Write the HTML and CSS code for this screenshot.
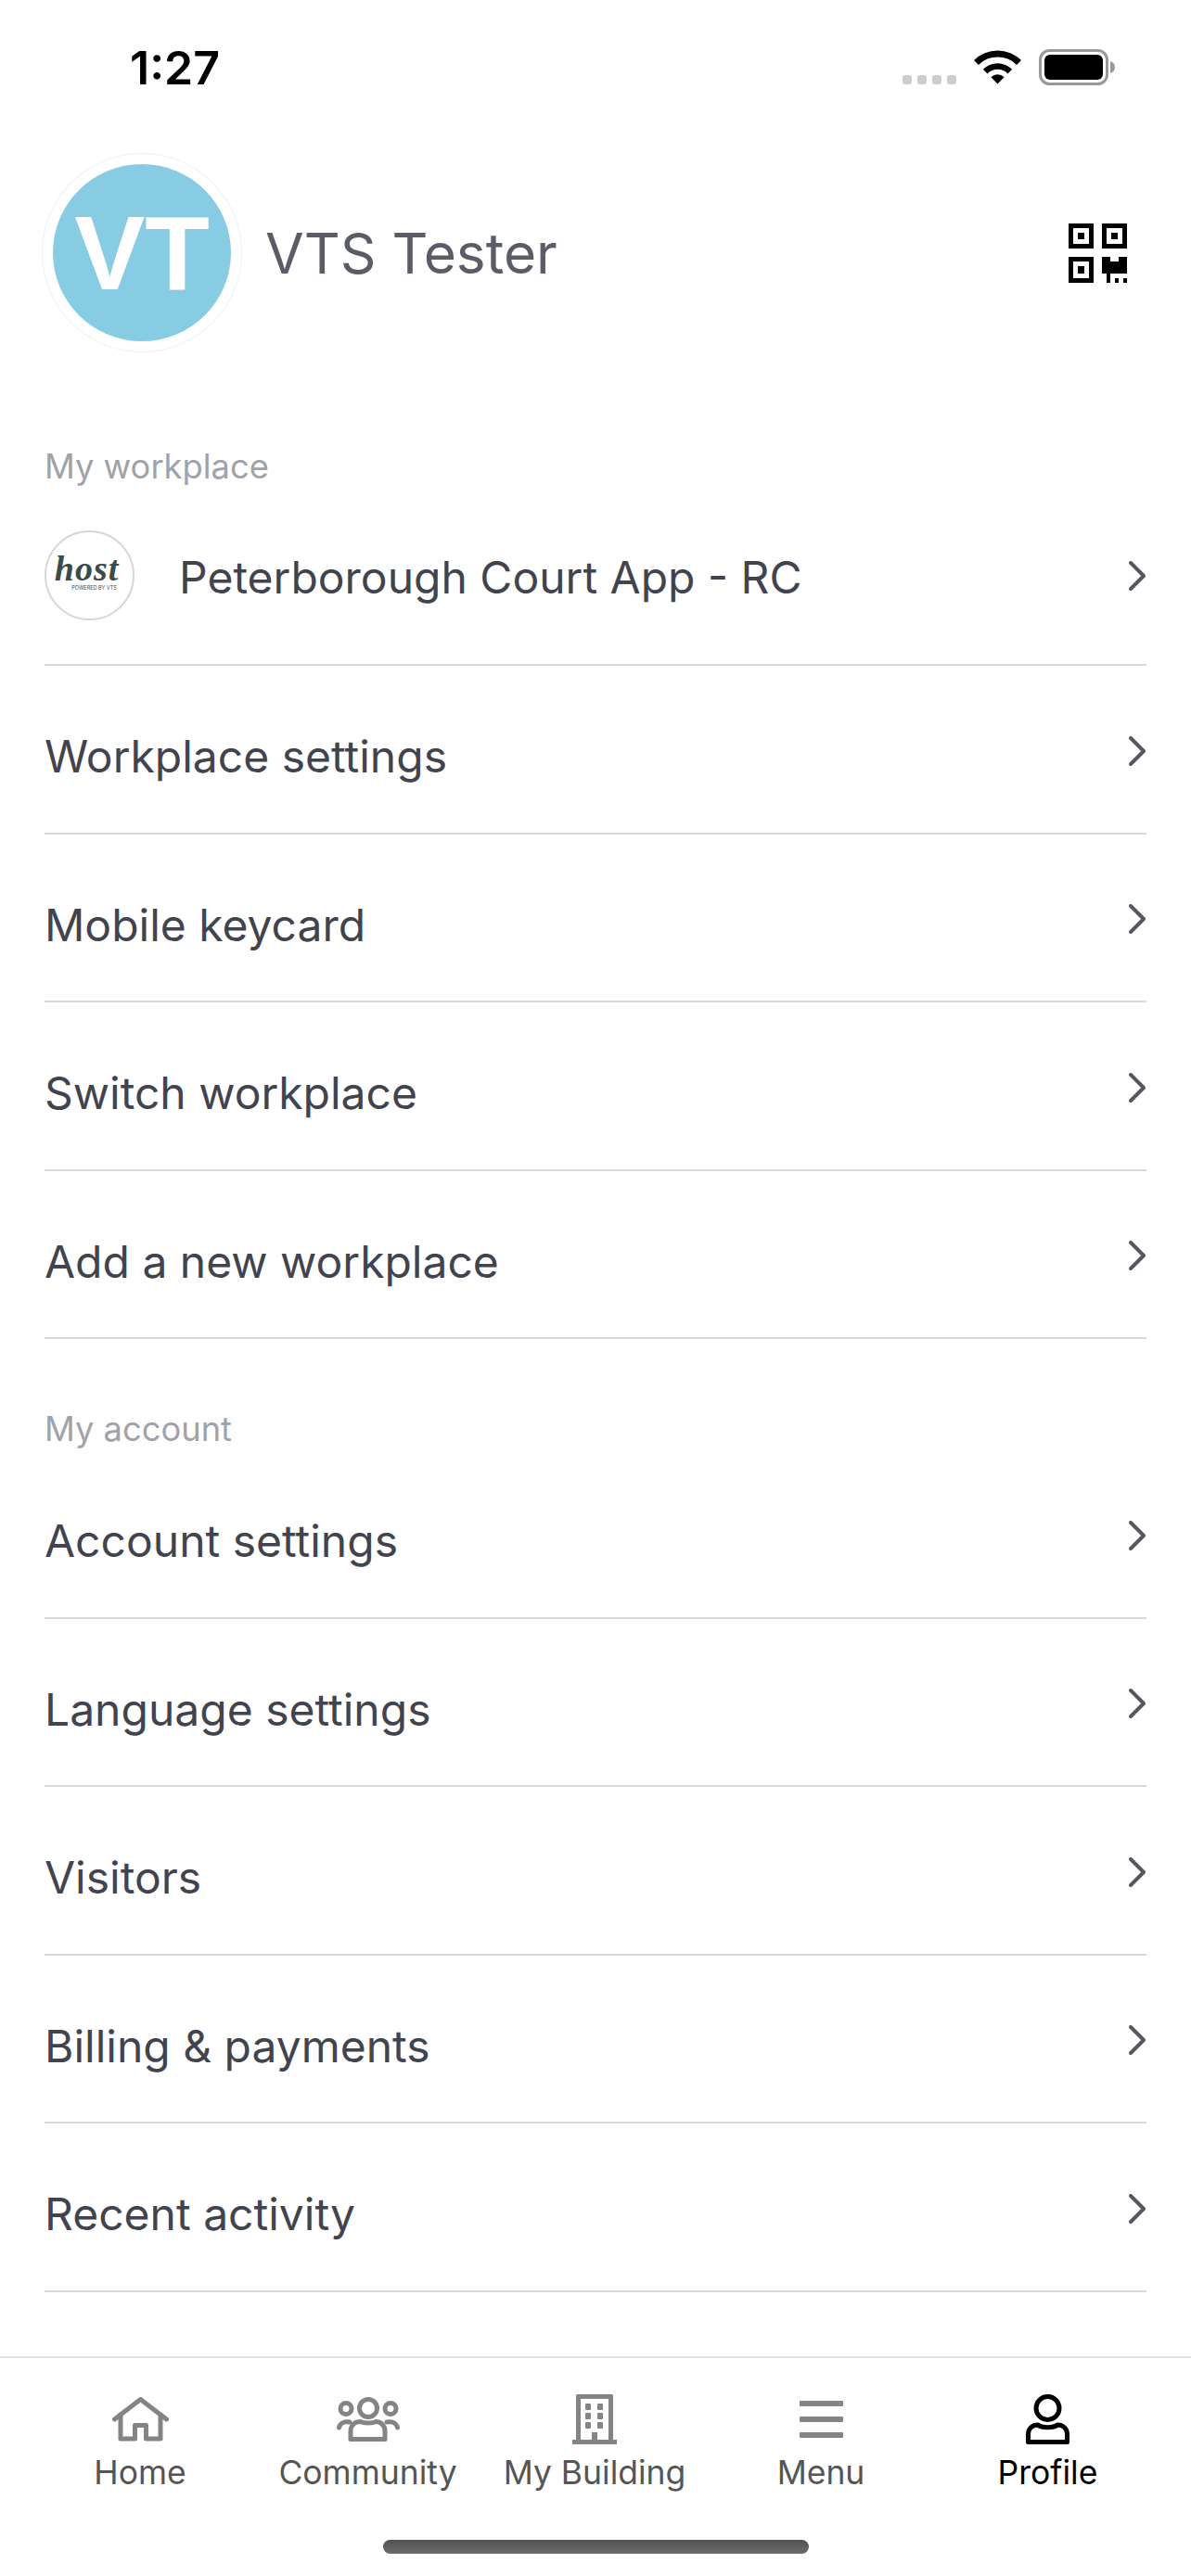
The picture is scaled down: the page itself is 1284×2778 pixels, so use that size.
FILE: index.html
```html
<!DOCTYPE html>
<html lang="en">
<head>
<meta charset="utf-8">
<title>Profile</title>
<link rel="stylesheet" href="styles.css">
</head>
<body>
<div class="screen">
  <div class="status">
    <span class="time">1:27</span>
    <div class="status-icons">
      <div class="dots"><i></i><i></i><i></i><i></i></div>
      <svg class="wifi" width="51" height="37" viewBox="0 0 51 37"><path d="M0 11A36 36 0 0 1 51 11L46 15.9A29 29 0 0 0 5 15.9Z M9.9 20.8A22 22 0 0 1 41.1 20.8L36.5 25.4A15.5 15.5 0 0 0 14.5 25.4Z M18.4 29.3A10 10 0 0 1 32.6 29.3L25.5 36.4Z"/></svg>
      <svg class="battery" width="82" height="39" viewBox="0 0 82 39"><rect x="1.5" y="1.5" width="72" height="36" rx="10" fill="none" stroke="#999" stroke-width="3"/><rect x="6" y="6" width="63" height="27" rx="6"/><path d="M77 13C80 14 82 16 82 19.500C82 23 80 25 77 26Z" fill="#999"/></svg>
    </div>
  </div>

  <header class="profile">
    <div class="avatar"><div class="avatar-fill">VT</div></div>
    <span class="name">VTS Tester</span>
    <svg class="qr" width="63" height="64" viewBox="0 0 63 64">
      <path fill-rule="evenodd" d="M0 0H27V27H0Z M5 5V22H22V5Z M10 10H17V17H10Z"/>
      <path fill-rule="evenodd" d="M36 0H63V27H36Z M41 5V22H58V5Z M46 10H53V17H46Z"/>
      <path fill-rule="evenodd" d="M0 36H27V64H0Z M5 41V59H22V41Z M10 46H17V54H10Z"/>
      <path d="M36 36H45V41H54V36H63V54H45V64H41V54H36Z"/>
      <path d="M50 59H54V64H50Z M59 59H63V64H59Z"/>
    </svg>
  </header>

  <section class="section section-first">
    <div class="section-label">My workplace</div>
    <a class="row row-workplace">
      <div class="logo">
        <span class="logo-word">host</span>
        <span class="logo-sub">POWERED BY VTS</span>
      </div>
      <span class="row-text">Peterborough Court App - RC</span>
      <svg class="chev" width="18" height="32" viewBox="0 0 18 32"><path d="M2 2L16 16L2 30"/></svg>
    </a>
    <a class="row"><span class="row-text">Workplace settings</span><svg class="chev" width="18" height="32" viewBox="0 0 18 32"><path d="M2 2L16 16L2 30"/></svg></a>
    <a class="row"><span class="row-text">Mobile keycard</span><svg class="chev" width="18" height="32" viewBox="0 0 18 32"><path d="M2 2L16 16L2 30"/></svg></a>
    <a class="row"><span class="row-text">Switch workplace</span><svg class="chev" width="18" height="32" viewBox="0 0 18 32"><path d="M2 2L16 16L2 30"/></svg></a>
    <a class="row"><span class="row-text">Add a new workplace</span><svg class="chev" width="18" height="32" viewBox="0 0 18 32"><path d="M2 2L16 16L2 30"/></svg></a>
  </section>

  <section class="section section-second">
    <div class="section-label">My account</div>
    <a class="row"><span class="row-text">Account settings</span><svg class="chev" width="18" height="32" viewBox="0 0 18 32"><path d="M2 2L16 16L2 30"/></svg></a>
    <a class="row"><span class="row-text">Language settings</span><svg class="chev" width="18" height="32" viewBox="0 0 18 32"><path d="M2 2L16 16L2 30"/></svg></a>
    <a class="row"><span class="row-text">Visitors</span><svg class="chev" width="18" height="32" viewBox="0 0 18 32"><path d="M2 2L16 16L2 30"/></svg></a>
    <a class="row"><span class="row-text">Billing &amp; payments</span><svg class="chev" width="18" height="32" viewBox="0 0 18 32"><path d="M2 2L16 16L2 30"/></svg></a>
    <a class="row"><span class="row-text">Recent activity</span><svg class="chev" width="18" height="32" viewBox="0 0 18 32"><path d="M2 2L16 16L2 30"/></svg></a>
  </section>

  <footer class="tabbar">
    <nav class="tabs">
      <div class="tab">
        <div class="tab-icon"><svg width="61" height="48" viewBox="0 0 61 48" fill="none" stroke="#848484" stroke-width="5" stroke-linecap="round" stroke-linejoin="round"><path d="M2.500 24L30.500 2.500L58.500 24"/><path d="M9 19V45H24.500V30.500H36.500V45H52V19"/></svg></div>
        <span class="tab-label">Home</span>
      </div>
      <div class="tab">
        <div class="tab-icon"><svg width="68" height="48" viewBox="0 0 68 48" fill="none" stroke="#848484" stroke-width="5" stroke-linecap="round" stroke-linejoin="round"><circle cx="34" cy="12" r="9.500"/><circle cx="10" cy="12.500" r="6"/><circle cx="58" cy="12.500" r="6"/><path d="M2.500 33C3.500 28.500 8 26 14 27"/><path d="M65.500 33C64.500 28.500 60 26 54 27"/><path d="M15 45.500H52V37C52 30 47 26.500 42 26.500C39 28.500 29 28.500 26 26.500C20 26.500 15 30 15 37Z"/></svg></div>
        <span class="tab-label">Community</span>
      </div>
      <div class="tab">
        <div class="tab-icon"><svg width="48" height="54" viewBox="0 0 48 54" fill="#848484"><path fill-rule="evenodd" d="M4 1.500Q4 0 5.500 0H42.500Q44 0 44 1.500V49H48V54H0V49H4Z M9 5V49H21V41H27V49H39V5Z"/><rect x="14" y="10" width="6" height="7" rx="1"/><rect x="27" y="10" width="6" height="7" rx="1"/><rect x="14" y="20" width="6" height="7" rx="1"/><rect x="27" y="20" width="6" height="7" rx="1"/><rect x="14" y="30" width="6" height="7" rx="1"/><rect x="27" y="30" width="6" height="7" rx="1"/></svg></div>
        <span class="tab-label">My Building</span>
      </div>
      <div class="tab">
        <div class="tab-icon"><svg width="47" height="40" viewBox="0 0 47 40" fill="#848484"><rect width="47" height="6" rx="1"/><rect y="17" width="47" height="6" rx="1"/><rect y="34" width="47" height="6" rx="1"/></svg></div>
        <span class="tab-label">Menu</span>
      </div>
      <div class="tab tab-active">
        <div class="tab-icon"><svg width="47" height="54" viewBox="0 0 47 54" fill="none" stroke="#000" stroke-width="5" stroke-linejoin="round"><ellipse cx="23.500" cy="15" rx="12.500" ry="12.500"/><path d="M2.500 51.500H44.500V43C44.500 37 40 33 34 33C30 36.500 17 36.500 13 33C7 33 2.500 37 2.500 43Z"/></svg></div>
        <span class="tab-label">Profile</span>
      </div>
    </nav>
    <div class="home-bar"></div>
  </footer>
</div>
</body>
</html>
```

FILE: styles.css
```css
* { box-sizing: border-box; }
html, body { margin: 0; padding: 0; background: #fff; }
body { font-family: Inter, "Liberation Sans", sans-serif; }

.screen {
  width: 1284px;
  height: 2778px;
  display: flex;
  flex-direction: column;
  overflow: hidden;
  background: #fff;
}

/* status bar */
.status {
  height: 165px;
  padding: 53px 82px 0 140px;
  display: flex;
  justify-content: space-between;
  align-items: flex-start;
}
.time {
  font-size: 50px;
  font-weight: 600;
  line-height: 40px;
  color: #000;
}
.status-icons { display: flex; align-items: flex-end; height: 39px; }
.dots { display: flex; gap: 6px; margin-right: 19px; margin-bottom: 1px; }
.dots i { display: block; width: 10px; height: 10px; border-radius: 3px; background: #cdcdcd; }
.wifi { margin-right: 19px; margin-bottom: 1px; }

/* profile header */
.profile {
  height: 215px;
  padding: 0 69px 0 45px;
  display: flex;
  align-items: center;
}
.avatar {
  width: 216px;
  height: 215px;
  padding: 11px;
  border-radius: 50%;
  border: 1px solid #e6f4f9;
}
.avatar-fill {
  width: 100%;
  height: 100%;
  border-radius: 50%;
  background: #87cce2;
  color: #fff;
  font-family: "Liberation Sans", Arial, sans-serif;
  font-weight: 700;
  font-size: 114px;
  display: flex;
  align-items: center;
  justify-content: center;
}
.name {
  margin-left: 25px;
  flex: 1;
  font-size: 60.4px;
  color: #5a5d67;
}

/* sections */
.section { padding: 0 48px; }
.section-first { padding-top: 101px; }
.section-second { padding-top: 76px; }
.section-label {
  height: 44px;
  line-height: 44px;
  font-size: 36.3px;
  color: #a0a2a9;
}
.section-second .section-label { line-height: 42px; }
.row {
  height: 181.5px;
  display: flex;
  align-items: center;
  justify-content: space-between;
  border-bottom: 2px solid #d9d9d9;
}
.row-text {
  font-size: 48px;
  color: #41434e;
  padding-top: 16px;
}
.chev {
  fill: none;
  stroke: #555861;
  stroke-width: 4;
  stroke-linecap: round;
  stroke-linejoin: round;
  margin-top: 4px;
  margin-right: 1px;
}
.row-workplace { height: 193px; justify-content: flex-start; }
.row-workplace .row-text { flex: 1; margin-left: 48px; padding-top: 3px; }
.row-workplace .chev { margin-top: 0; }

.logo {
  width: 97px;
  height: 97px;
  flex: none;
  border-radius: 50%;
  border: 2px solid #d6d6d6;
  display: flex;
  flex-direction: column;
  align-items: center;
  justify-content: center;
}
.logo-word {
  font-family: "Liberation Serif", serif;
  font-style: italic;
  font-weight: 700;
  font-size: 38px;
  line-height: 30px;
  letter-spacing: 1px;
  color: #3a4b4b;
  margin-top: -6px;
  margin-right: 6px;
}
.logo-sub {
  font-size: 5.5px;
  line-height: 6px;
  color: #3a4b4b;
  margin-left: 10px;
  margin-top: 3px;
  white-space: nowrap;
}

/* tab bar */
.tabbar {
  margin-top: auto;
  height: 237px;
  border-top: 2px solid #e2e2e2;
  display: flex;
  flex-direction: column;
}
.tabs {
  display: grid;
  grid-template-columns: 246px 245px 244px 244px 245px;
  padding: 39px 0 0 28px;
}
.tab { display: flex; flex-direction: column; align-items: center; }
.tab-icon { height: 54px; display: flex; align-items: center; justify-content: center; }
.tab-label {
  margin-top: 9px;
  font-size: 35.5px;
  line-height: 44px;
  color: #555;
  white-space: nowrap;
}
.tab-active .tab-label { color: #000; }
.home-bar {
  width: 459px;
  height: 15px;
  margin: 50px auto 0;
  border-radius: 8px;
  background: linear-gradient(#505050, #6c6c6c);
}
```
